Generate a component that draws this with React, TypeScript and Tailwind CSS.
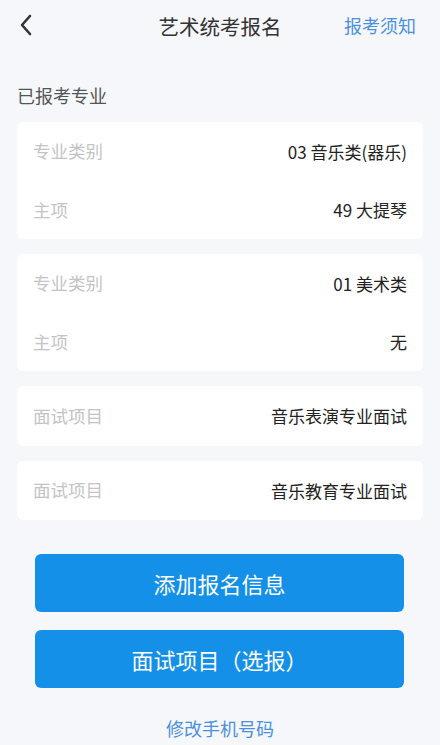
const font = { fontFamily: '"Noto Sans CJK SC", "Noto Sans", sans-serif' };

type Row = { label: string; value: string };

const groups: Row[][] = [
  [
    { label: '专业类别', value: '03 音乐类(器乐)' },
    { label: '主项', value: '49 大提琴' },
  ],
  [
    { label: '专业类别', value: '01 美术类' },
    { label: '主项', value: '无' },
  ],
  [{ label: '面试项目', value: '音乐表演专业面试' }],
  [{ label: '面试项目', value: '音乐教育专业面试' }],
];

function Card({ rows }: { rows: Row[] }) {
  const rowHeight = rows.length > 1 ? 'h-[58.5px]' : 'h-[59.5px]';
  return (
    <div className="bg-white rounded-md px-4">
      {rows.map((row, i) => (
        <div key={i} className={`flex items-center justify-between ${rowHeight}`}>
          <span className="text-[17.5px] text-[#c4c4c4]">{row.label}</span>
          <span className="text-[17px] text-[#222]">{row.value}</span>
        </div>
      ))}
    </div>
  );
}

export default function App() {
  return (
    <div className="w-[440px] h-[745px] overflow-hidden bg-[#f6f7fb]" style={font}>
      <div className="relative h-[52px] flex items-center justify-center">
        <svg
          className="absolute left-[18px] top-[14px]"
          width="16"
          height="22"
          viewBox="0 0 16 22"
          fill="none"
          stroke="#333"
          strokeWidth="2.6"
          strokeLinecap="round"
          strokeLinejoin="round"
        >
          <path d="M12 2 L4 11 L12 20" />
        </svg>
        <span className="text-[20.5px] text-[#333]">艺术统考报名</span>
        <span className="absolute right-[24px] top-[13px] text-[18px] leading-6 text-[#4a90e2]">报考须知</span>
      </div>

      <div className="px-[17px]">
        <div className="mt-[31px] text-[18px] leading-6 text-[#555]">已报考专业</div>
        <div className="mt-[15px] flex flex-col gap-[15px]">
          {groups.map((rows, i) => (
            <Card key={i} rows={rows} />
          ))}
        </div>
      </div>

      <div className="px-[35px] pr-[36px] mt-[34px] flex flex-col gap-[18px]">
        <button className="h-[58px] rounded-md bg-[#1590e9] text-white text-[22px]">添加报名信息</button>
        <button className="h-[58px] rounded-md bg-[#1590e9] text-white text-[22px]">面试项目（选报）</button>
      </div>

      <div className="mt-[28px] text-center text-[18px] leading-6 text-[#4a90e2]">修改手机号码</div>
    </div>
  );
}
